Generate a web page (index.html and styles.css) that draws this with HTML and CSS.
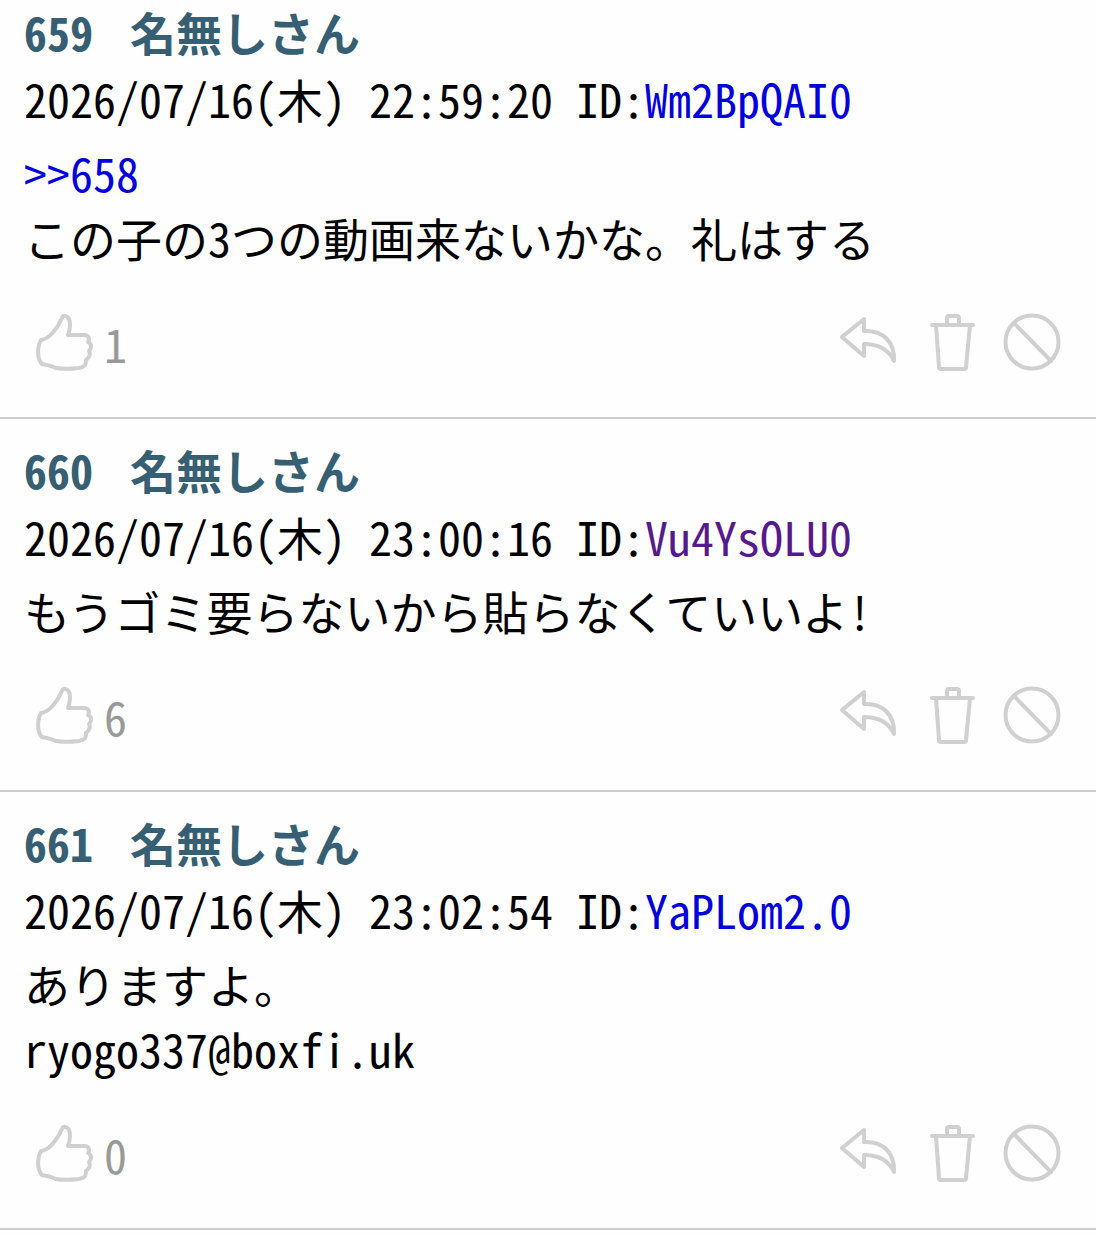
FILE: index.html
```html
<!DOCTYPE html>
<html lang="ja">
<head>
    <meta charset="UTF-8">
    <meta name="viewport" content="width=device-width, initial-scale=1.0">
    <title>名無しさん</title>
    <link rel="stylesheet" href="styles.css">
</head>
<body>
    <!-- shared icons -->
    <svg class="icon-defs" aria-hidden="true">
        <symbol id="icon-like" viewBox="0 0 80 80">
            <path d="M44 32H60C65 32 66 36 64 39C68 41 68 45 65 48C67 51 65 55 62 57C62 63 60 64 55 65C47 66 38 66 32 65C28 63 25 62 18 61C13 56 13 44 17 37C26 36 34 24 38 15C39 12 43 12 45 16C47 20 46 26 44 32Z"/>
        </symbol>
        <symbol id="icon-reply" viewBox="0 0 80 80">
            <path d="M10 34L32 16V28C51 27 63 39 62 58C57 47 48 41 32 41V53Z"/>
        </symbol>
        <symbol id="icon-delete" viewBox="0 0 80 80">
            <path d="M20 22H61M35 22V15Q35 13 37 13H45Q47 13 47 15V22M24 22L27 64Q27 66 29 66H52Q54 66 54 64L58 22"/>
        </symbol>
        <symbol id="icon-block" viewBox="0 0 80 80">
            <circle cx="40" cy="39" r="26.5"/>
            <path d="M22 20L59 58"/>
        </symbol>
    </svg>

    <main class="thread">
        <article class="post">
            <h2 class="post-title"><span class="number">659</span><span class="name">名無しさん</span></h2>
            <div class="post-meta">2026/07/16(木) 22:59:20 ID:<a href="#id-Wm2BpQAI0">Wm2BpQAI0</a></div>
            <div class="post-body"><a href="#658">&gt;&gt;658</a><br>この子の3つの動画来ないかな。礼はする</div>
            <div class="post-actions">
                <button class="like" aria-label="いいね"><svg class="icon"><use href="#icon-like"/></svg></button>
                <span class="count">1</span>
                <div class="tools">
                    <button aria-label="返信"><svg class="icon"><use href="#icon-reply"/></svg></button>
                    <button aria-label="削除"><svg class="icon"><use href="#icon-delete"/></svg></button>
                    <button aria-label="ブロック"><svg class="icon"><use href="#icon-block"/></svg></button>
                </div>
            </div>
        </article>

        <article class="post">
            <h2 class="post-title"><span class="number">660</span><span class="name">名無しさん</span></h2>
            <div class="post-meta">2026/07/16(木) 23:00:16 ID:<a class="seen" href="#id-Vu4YsOLU0">Vu4YsOLU0</a></div>
            <div class="post-body">もうゴミ要らないから貼らなくていいよ!</div>
            <div class="post-actions">
                <button class="like" aria-label="いいね"><svg class="icon"><use href="#icon-like"/></svg></button>
                <span class="count">6</span>
                <div class="tools">
                    <button aria-label="返信"><svg class="icon"><use href="#icon-reply"/></svg></button>
                    <button aria-label="削除"><svg class="icon"><use href="#icon-delete"/></svg></button>
                    <button aria-label="ブロック"><svg class="icon"><use href="#icon-block"/></svg></button>
                </div>
            </div>
        </article>

        <article class="post">
            <h2 class="post-title"><span class="number">661</span><span class="name">名無しさん</span></h2>
            <div class="post-meta">2026/07/16(木) 23:02:54 ID:<a href="#id-YaPLom2.0">YaPLom2.0</a></div>
            <div class="post-body">ありますよ。<br>ryogo337@boxfi.uk</div>
            <div class="post-actions">
                <button class="like" aria-label="いいね"><svg class="icon"><use href="#icon-like"/></svg></button>
                <span class="count">0</span>
                <div class="tools">
                    <button aria-label="返信"><svg class="icon"><use href="#icon-reply"/></svg></button>
                    <button aria-label="削除"><svg class="icon"><use href="#icon-delete"/></svg></button>
                    <button aria-label="ブロック"><svg class="icon"><use href="#icon-block"/></svg></button>
                </div>
            </div>
        </article>
    </main>
</body>
</html>
```
FILE: styles.css
```css
body {
    margin: 0;
    background-color: #fefefe;
    color: #000;
    font-family: "Noto Sans CJK JP", sans-serif;
    font-feature-settings: "hwid"; /* half-width latin, two per kanji */
    font-variant-ligatures: none;
    font-size: 46px;
    line-height: 65px;
}
a {
    color: #0000dd;
    text-decoration: none;
}
a.seen {
    color: #551a8b;
}
.icon-defs {
    display: none;
}
.post {
    padding: 20px 24px 34px;
    border-bottom: 2px solid #ccc;
}
.post:first-child {
    padding-top: 1px;
}
.post-title {
    display: flex;
    gap: 37px;
    margin: 0 0 4px;
    color: #365f73;
    font-size: 46px;
    font-weight: bold;
    line-height: 61px;
}
.post-meta {
    margin-bottom: 9px;
}
.post-body {
    margin-bottom: 33px;
    overflow-wrap: anywhere;
}
.post-actions {
    display: flex;
    align-items: center;
}
.count {
    color: #999;
}
.tools {
    display: flex;
    margin-left: auto;
}
button {
    padding: 0;
    border: none;
    background: none;
    cursor: pointer;
}
.icon {
    display: block;
    width: 80px;
    height: 80px;
    fill: none;
    stroke: #d0d0d0;
    stroke-width: 4px;
    stroke-linecap: round;
    stroke-linejoin: round;
}
```
